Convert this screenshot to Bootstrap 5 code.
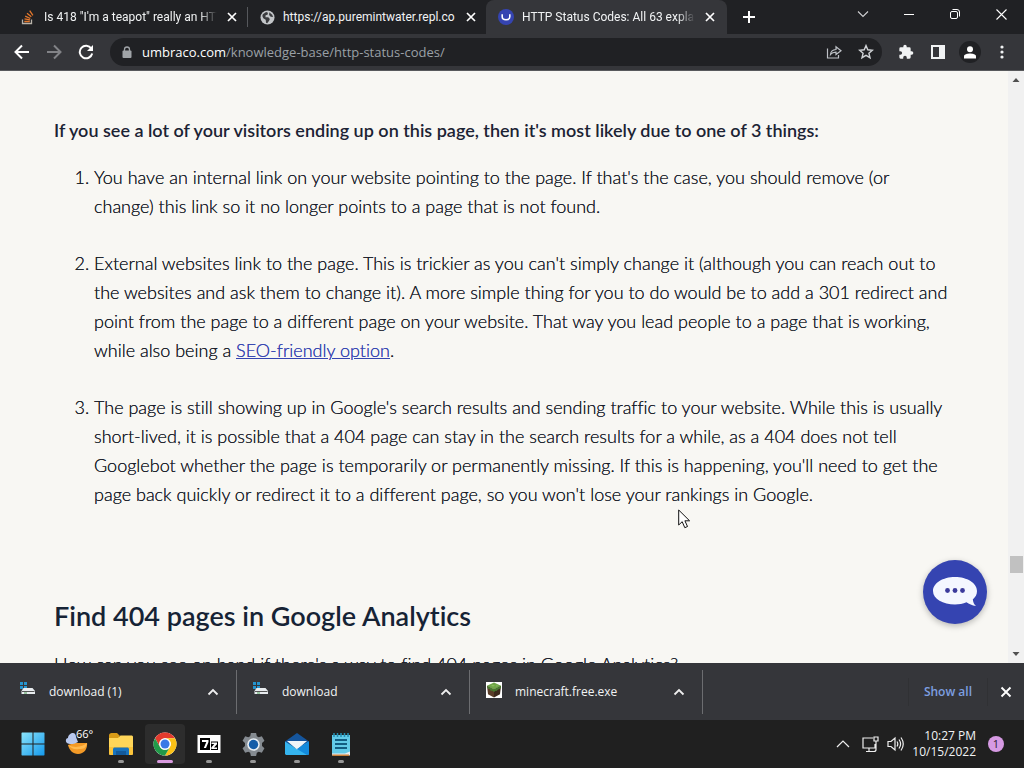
<!DOCTYPE html>
<html lang="en">
<head>
<meta charset="utf-8">
<meta name="viewport" content="width=device-width, initial-scale=1">
<title>HTTP Status Codes: All 63 explained</title>
<link href="https://cdn.jsdelivr.net/npm/bootstrap@5.3.0/dist/css/bootstrap.min.css" rel="stylesheet">
<style>
  body { font-family: "Open Sans", "Noto Sans", sans-serif; font-size: 12px; line-height: 16px; background: #202124; color: #f1f3f4; }
  svg { display: block; flex: none; }
  .plain { border: 0; background: none; padding: 0; color: inherit; display: flex; align-items: center; justify-content: center; flex: none; }
  .tab-strip { height: 34px; background: #202124; }
  .page-tab { height: 34px; flex: 0 1 238px; min-width: 0; padding-left: 12px; padding-right: 8px; }
  .page-tab.first-tab { flex-basis: 248px; padding-left: 20px; border-right: 1px solid transparent; border-image: linear-gradient(transparent 8px, #56585c 8px 26px, transparent 26px) 1; }
  .page-tab.current { background: #35363a; border-radius: 8px 8px 0 0; flex-basis: 241px; padding-right: 10px; }
  .tab-title { font-family: Roboto, sans-serif; flex: 1 1 0; overflow: hidden; white-space: nowrap; color: #f1f3f4; text-decoration: none; }
  .fade-end { -webkit-mask-image: linear-gradient(90deg, #000 90%, transparent); mask-image: linear-gradient(90deg, #000 90%, transparent); }
  .win-btn { width: 46px; height: 28px; }
  .toolbar { height: 37px; background: #35363a; border-bottom: 1px solid #58595c; padding-left: 6px; padding-right: 6px; }
  .tool { width: 32px; height: 28px; }
  .omnibox { height: 28px; border-radius: 14px; background: #202124; padding-left: 12px; gap: 10px; }
  .omnibox input { background: none; border: 0; outline: 0; padding: 0; color: #9aa0a6; font-size: 13px; }
  .domain { font-size: 13px; color: #fff; }
  .avatar-dot { width: 22px; height: 22px; border-radius: 50%; background: #202124; }
  .view { background: #f8f7f3; min-height: 0; }
  .article { font-family: Lato, sans-serif; font-variant-ligatures: none; font-size: 18px; line-height: 29px; color: #1b1f2c; padding: 45px 60px 0 54px; overflow: hidden; }
  .lead-line { font-weight: 600; color: #1c2334; margin-bottom: 18px; }
  .body-text { font-weight: 300; text-shadow: 0 0 0 currentColor; }
  .article ol { padding-left: 40px; margin-bottom: 89px; }
  .article li { margin-bottom: 28px; }
  .article a { color: #3544b1; }
  .article h2 { font-size: 27px; line-height: 36px; font-weight: 600; color: #162335; margin-bottom: 16px; }
  .scroll-track { width: 16px; background: #f1f1f1; }
  .thumb { width: 13px; height: 17px; background: #c1c1c1; }
  .chat { position: absolute; right: 37px; bottom: 39px; width: 64px; height: 64px; border-radius: 50%; background: #3544b1; box-shadow: 0 2px 6px #0004; }
  .pointer { position: absolute; left: 678px; top: 438px; }
  .shelf { height: 57px; background: #35363a; }
  .shelf-item { width: 233px; height: 44px; border-right: 1px solid #6c6d70; padding-left: 16px; padding-right: 17px; }
  .shelf-item.first-item { width: 237px; padding-left: 20px; }
  .shelf-item a { margin-left: 13px; }
  .show-all { height: 28px; padding: 0 15px; color: #7d9fe0; font-weight: 600; border: solid #303134; border-width: 0 1px; }
  .taskbar { height: 48px; background: #202020; }
  .apps { padding-left: 5px; }
  .app { width: 40px; height: 40px; border-radius: 4px; position: relative; }
  .app.open::after { content: ""; position: absolute; bottom: 1px; left: 17px; width: 6px; height: 3px; border-radius: 2px; background: #969696; }
  .app.active { background: #2d2d2d; }
  .app.active::after { left: 12px; width: 16px; background: #d99be0; }
  .temp { position: absolute; left: 19px; top: 3px; font-size: 11px; line-height: 14px; color: #fff; }
  .count { width: 16px; height: 16px; border-radius: 50%; background: #d69ae3; color: #2b1b30; font-size: 11px; }
</style>
</head>
<body>
<div class="vh-100 d-flex flex-column overflow-hidden">

  <header class="flex-shrink-0">
    <div class="tab-strip d-flex">
      <div class="page-tab first-tab d-flex align-items-center gap-2">
        <svg width="16" height="16" viewBox="0 0 16 16" fill="none"><path d="M2.5 10.5v4h9v-4" stroke="#b8b2a9" stroke-width="1.3"/><path d="M4.3 12.5h5.5M4.5 9.9l5.500 1M5.200 7.100l5.100 2.400M7 4.300l4.300 3.500M9.700 1.700l3.200 4.600" stroke="#e5782c" stroke-width="1.3"/></svg>
        <a href="#" class="tab-title fade-end">Is 418 "I'm a teapot" really an HTTP</a>
        <button class="plain" aria-label="Close tab"><svg width="14" height="14" viewBox="0 0 14 14" stroke="#fff" stroke-width="1.7"><path d="M3 3l8 8M11 3l-8 8"/></svg></button>
      </div>
      <div class="page-tab d-flex align-items-center gap-2">
        <svg width="15" height="15" viewBox="0 0 16 16"><circle cx="8" cy="8" r="7.5" fill="#c3c6c9"/><path d="M3 4.500L6.500 2l2 1-.5 2-2 .6-.2 2 3 .2 1.700 1.700-.8 2-2 2.600-1.300-.6-.3-3-2.600-1.800-1-2.300z" fill="#3a3b3e"/><path d="M10 2.500l3 2.500 1 2.500-2.600-.3-1.700-2z" fill="#3a3b3e"/></svg>
        <a href="#" class="tab-title">https://ap.puremintwater.repl.co</a>
        <button class="plain" aria-label="Close tab"><svg width="14" height="14" viewBox="0 0 14 14" stroke="#fff" stroke-width="1.7"><path d="M3 3l8 8M11 3l-8 8"/></svg></button>
      </div>
      <div class="page-tab current d-flex align-items-center gap-2">
        <svg width="16" height="16" viewBox="0 0 16 16"><circle cx="8" cy="8" r="8" fill="#3544b1"/><path d="M4.200 5.200v2.600c0 2 1 3 3.800 3s3.800-1 3.800-3V5.200" fill="none" stroke="#fff" stroke-width="1.6"/></svg>
        <a href="#" class="tab-title fade-end">HTTP Status Codes: All 63 explained</a>
        <button class="plain" aria-label="Close tab"><svg width="14" height="14" viewBox="0 0 14 14" stroke="#fff" stroke-width="1.7"><path d="M3 3l8 8M11 3l-8 8"/></svg></button>
      </div>
      <button class="plain px-3" aria-label="New tab"><svg width="12" height="12" viewBox="0 0 12 12" stroke="#fff" stroke-width="2"><path d="M6 0v12M0 6h12"/></svg></button>
      <div class="ms-auto d-flex">
        <button class="plain win-btn" aria-label="Search tabs"><svg width="12" height="8" viewBox="0 0 12 8" fill="none" stroke="#d0d1d3" stroke-width="1.1"><path d="M1 1.500l5 5 5-5"/></svg></button>
        <button class="plain win-btn" aria-label="Minimize"><svg width="10" height="10" viewBox="0 0 10 10"><path d="M0 5.500h10" stroke="#fff"/></svg></button>
        <button class="plain win-btn" aria-label="Restore"><svg width="10" height="10" viewBox="0 0 10 10" fill="none" stroke="#fff"><rect x=".5" y="2.500" width="7" height="7" rx="1.5"/><path d="M2.500 .5H7a2.500 2.500 0 0 1 2.500 2.500v4.500"/></svg></button>
        <button class="plain win-btn" aria-label="Close"><svg width="11" height="11" viewBox="0 0 11 11" stroke="#fff" stroke-width="1.1"><path d="M.5 .5l10 10M10.500 .5l-10 10"/></svg></button>
      </div>
    </div>

    <div class="toolbar d-flex align-items-center">
      <button class="plain tool" aria-label="Back"><svg width="16" height="16" viewBox="0 0 16 16" fill="none" stroke="#fff" stroke-width="2"><path d="M15 8H2M8 1.500L1.500 8 8 14.500"/></svg></button>
      <button class="plain tool" aria-label="Forward"><svg width="16" height="16" viewBox="0 0 16 16" fill="none" stroke="#828387" stroke-width="2"><path d="M1 8h13M8 1.500L14.500 8 8 14.500"/></svg></button>
      <button class="plain tool" aria-label="Reload"><svg width="16" height="16" viewBox="0 0 16 16"><path d="M13.300 4.500A6.300 6.300 0 1 0 14.200 9.500" fill="none" stroke="#fff" stroke-width="2"/><path d="M15 1v6H9z" fill="#fff"/></svg></button>
      <div class="omnibox d-flex align-items-center flex-grow-1 ms-2 me-2">
        <svg width="10" height="13" viewBox="0 0 10 13"><path d="M2.500 6V3.500a2.500 2.500 0 0 1 5 0V6" fill="none" stroke="#a0a4a8" stroke-width="1.300"/><rect x="0.500" y="4.500" width="9" height="7.500" rx="1" fill="#a0a4a8"/></svg>
        <div class="d-flex flex-grow-1">
          <label for="url" class="domain">umbraco.com</label>
          <input id="url" class="flex-grow-1" type="text" value="/knowledge-base/http-status-codes/">
        </div>
        <div class="d-flex">
          <button class="plain tool" aria-label="Share"><svg width="16" height="16" viewBox="0 0 16 16" fill="none" stroke="#bdc1c6" stroke-width="1.200"><path d="M1.500 4.500v9.500h11v-3M4.500 10.500c.3-3.300 2-4.800 5.500-5V2.800l5 4-5 3.700V8.200c-2.500 0-4.300.7-5.500 2.300z"/></svg></button>
          <button class="plain tool" aria-label="Bookmark"><svg width="16" height="16" viewBox="0 0 16 16" fill="none" stroke="#d0d3d6" stroke-width="1.400"><path d="M8 1.600l1.800 4.200 4.600.4-3.500 3 1.100 4.500L8 11.300l-4 2.400 1.100-4.500-3.500-3 4.600-.4z"/></svg></button>
        </div>
      </div>
      <button class="plain tool" aria-label="Extensions"><svg width="16" height="16" viewBox="0 0 24 24" fill="#f1f3f4"><path d="M20.500 11H19V7a2 2 0 0 0-2-2h-4V3.500a2.500 2.500 0 0 0-5 0V5H4a2 2 0 0 0-2 2v3.800h1.500a2.700 2.700 0 0 1 0 5.400H2V20a2 2 0 0 0 2 2h3.800v-1.500a2.700 2.700 0 0 1 5.400 0V22H17a2 2 0 0 0 2-2v-4h1.500a2.500 2.500 0 0 0 0-5z"/></svg></button>
      <button class="plain tool" aria-label="Side panel"><svg width="14" height="14" viewBox="0 0 14 14"><path d="M0 0h14v14H0zM2 2v10h6V2z" fill="#f1f3f4" fill-rule="evenodd"/></svg></button>
      <button class="plain tool" aria-label="Profile"><span class="avatar-dot d-flex align-items-center justify-content-center"><svg width="12" height="13" viewBox="0 0 12 13" fill="#fff"><circle cx="6" cy="3.200" r="3"/><path d="M0 12.500v-2.300C0 8.300 3.500 7.500 6 7.500s6 .8 6 2.700v2.300z"/></svg></span></button>
      <button class="plain tool" aria-label="Menu"><svg width="4" height="14" viewBox="0 0 4 14" fill="#f1f3f4"><circle cx="2" cy="2" r="1.600"/><circle cx="2" cy="7" r="1.600"/><circle cx="2" cy="12" r="1.600"/></svg></button>
    </div>
  </header>

  <main class="view d-flex flex-grow-1 position-relative">
    <article class="article flex-grow-1">
      <p class="lead-line">If you see a lot of your visitors ending up on this page, then it's most likely due to one of 3 things:</p>
      <ol class="body-text">
        <li>You have an internal link on your website pointing to the page. If that's the case, you should remove (or change) this link so it no longer points to a page that is not found.</li>
        <li>External websites link to the page. This is trickier as you can't simply change it (although you can reach out to the websites and ask them to change it). A more simple thing for you to do would be to add a 301 redirect and point from the page to a different page on your website. That way you lead people to a page that is working, while also being a <a href="#">SEO-friendly option</a>.</li>
        <li>The page is still showing up in Google's search results and sending traffic to your website. While this is usually short-lived, it is possible that a 404 page can stay in the search results for a while, as a 404 does not tell Googlebot whether the page is temporarily or permanently missing. If this is happening, you'll need to get the page back quickly or redirect it to a different page, so you won't lose your rankings in Google.</li>
      </ol>
      <h2>Find 404 pages in Google Analytics</h2>
      <p class="body-text">How can you see on hand if there's a way to find 404 pages in Google Analytics?</p>
    </article>
    <div class="scroll-track d-flex flex-column align-items-center flex-shrink-0" aria-hidden="true">
      <svg width="16" height="16" viewBox="0 0 16 16"><path d="M4.500 11l3.500-4 3.500 4z" fill="#505050"/></svg>
      <div style="flex-grow:469"></div>
      <div class="thumb"></div>
      <div style="flex-grow:74"></div>
      <svg width="16" height="16" viewBox="0 0 16 16"><path d="M4.500 5h7L8 9z" fill="#505050"/></svg>
    </div>
    <button class="plain chat" aria-label="Open chat"><svg width="46" height="32" viewBox="0 0 46 32"><path d="M23 1C11 1 1 7 1 15s10 13.500 22 13.500c4 0 8-.7 11.500-2.200 2.500 1.500 5.500 3.300 9.500 3.700-1.800-1.500-3-4-3.200-6.500C43.500 21 45 18.500 45 15 45 7 35 1 23 1z" fill="#f4f7ff"/><g fill="#3c3b9c"><circle cx="15.500" cy="14.500" r="2.400"/><circle cx="23" cy="14.500" r="2.400"/><circle cx="30.500" cy="14.500" r="2.400"/></g></svg></button>
    <svg class="pointer" width="13" height="20" viewBox="0 0 13 20"><path d="M.7 1v15l3.500-3.300 2.600 6 2.700-1.200-2.600-5.700h4.700z" fill="#fff" stroke="#111"/></svg>
  </main>

  <section class="shelf d-flex align-items-center flex-shrink-0" aria-label="Downloads">
    <div class="shelf-item first-item d-flex align-items-center">
      <svg width="16" height="16" viewBox="0 0 16 16" class="mb-1"><path d="M0 0h3v3H0zM4 0h3v3H4zM0 4h3v3H0zM4 4h3v3H4z" fill="#2494cf"/><path d="M3.500 6h9l2.500 3v3H1.500V9z" fill="#e8ecef"/><path d="M2 9.500h12.500" stroke="#555"/><path d="M4 11h3" stroke="#4d9e55"/></svg>
      <a href="#" class="text-reset text-decoration-none me-auto">download (1)</a>
      <button class="plain" aria-label="Options"><svg width="12" height="8" viewBox="0 0 12 8" fill="none" stroke="#eee" stroke-width="1.800"><path d="M1.500 6.500L6 2l4.500 4.500"/></svg></button>
    </div>
    <div class="shelf-item d-flex align-items-center">
      <svg width="16" height="16" viewBox="0 0 16 16" class="mb-1"><path d="M0 0h3v3H0zM4 0h3v3H4zM0 4h3v3H0zM4 4h3v3H4z" fill="#2494cf"/><path d="M3.500 6h9l2.500 3v3H1.500V9z" fill="#e8ecef"/><path d="M2 9.500h12.500" stroke="#555"/><path d="M4 11h3" stroke="#4d9e55"/></svg>
      <a href="#" class="text-reset text-decoration-none me-auto">download</a>
      <button class="plain" aria-label="Options"><svg width="12" height="8" viewBox="0 0 12 8" fill="none" stroke="#eee" stroke-width="1.800"><path d="M1.500 6.500L6 2l4.500 4.500"/></svg></button>
    </div>
    <div class="shelf-item d-flex align-items-center">
      <svg width="16" height="16" viewBox="0 0 16 16" class="mb-1"><path d="M0 0h16v16H0z" fill="#fff"/><path d="M8 .5l7 3.200L8 7.500 1 3.700z" fill="#6fa548"/><path d="M1 3.700l7 3.800v8l-6-3.300z" fill="#5a3d28"/><path d="M15 3.700L8 7.500v8l6-3.300z" fill="#3c291c"/><path d="M1 3.700l7 3.800 7-3.800v2l-2 1.600-1 .1-1.500 1.700-1-.3L8 10 6 8.600 5 9 3.600 7 2 6.800z" fill="#47792f"/><path d="M5 3.500l2-.8 2 1-2 .8zM9.500 4l1.500-.8 1 .6-1.500.8z" fill="#87bf5a"/></svg>
      <a href="#" class="text-reset text-decoration-none me-auto">minecraft.free.exe</a>
      <button class="plain" aria-label="Options"><svg width="12" height="8" viewBox="0 0 12 8" fill="none" stroke="#eee" stroke-width="1.800"><path d="M1.500 6.500L6 2l4.500 4.500"/></svg></button>
    </div>
    <button class="plain show-all ms-auto">Show all</button>
    <button class="plain px-2 me-1 ms-1" aria-label="Close downloads"><svg width="12" height="12" viewBox="0 0 12 12" stroke="#fff" stroke-width="1.900"><path d="M1.500 1.500l9 9M10.500 1.500l-9 9"/></svg></button>
  </section>

  <footer class="taskbar d-flex align-items-center px-2 flex-shrink-0">
    <nav class="apps d-flex gap-1" aria-label="Taskbar">
      <button class="plain app" aria-label="Start"><svg width="24" height="24" viewBox="0 0 24 24"><defs><linearGradient id="win" x2="1" y2="1"><stop stop-color="#8be4fb"/><stop offset="1" stop-color="#1499ec"/></linearGradient></defs><path d="M1 .5h10.500v11H.5V1zM12.500 .5h10.500l.5.5v10.500h-11zM.5 12.500h11v11H1l-.5-.5zM12.500 12.500h11V23l-.5.5H12.500z" fill="url(#win)"/></svg></button>
      <button class="plain app" aria-label="Weather"><svg width="28" height="28" viewBox="0 0 28 28"><path d="M5 15c3-1 8-2 10-5l9 2c1 7-3 12-9 12-5 0-9-4-10-9z" fill="#f39a27"/><path d="M5 15c8 4 15 1 19-2-1 5-3 6-8 6-5 1-8-1-11-4z" fill="#ffba50"/><path d="M13 9h12v4H13z" fill="#202020"/><path d="M4 13c-2-2-1-5 1-5 0-3 3-5 5-5 2 0 3 2 3 4l2 5c-3 2-8 3-11 1z" fill="#b9c9ef"/></svg><span class="temp">66°</span></button>
      <button class="plain app open" aria-label="File Explorer"><svg width="26" height="24" viewBox="0 0 26 24"><path d="M1 3.500C1 2 2 1 3.500 1H9l2.500 2.500V8H1z" fill="#d89b17"/><path d="M1 6h9l2.500-2.500H24l1 1V22l-1 1H2l-1-1z" fill="#ffd659"/><path d="M1 15h24v7l-1 1H2l-1-1z" fill="#fbc43a"/><path d="M5 16.500l1-1h14l1 1V23H5z" fill="#1873bd"/><path d="M8 19h10v4H8z" fill="#135a9b"/></svg></button>
      <button class="plain app open active" aria-label="Chrome"><svg width="24" height="24" viewBox="0 0 24 24"><circle cx="12" cy="12" r="11.500" fill="#fff"/><path d="M2.040 6.250A11.500 11.500 0 0 1 21.960 6.250H12A5.700 5.700 0 0 0 7 14.900z" fill="#e33b2e"/><path d="M21.960 6.250A11.500 11.500 0 0 1 12 23.500L17 14.900A5.700 5.700 0 0 0 12 6.250z" fill="#fbc116"/><path d="M12 23.500A11.500 11.500 0 0 1 2.040 6.250L7 14.900A5.700 5.700 0 0 0 17 14.900z" fill="#219a49"/><circle cx="12" cy="12" r="5.700" fill="#fff"/><circle cx="12" cy="12" r="4.500" fill="#3979e6"/></svg></button>
      <button class="plain app open" aria-label="7-Zip"><svg width="24" height="20" viewBox="0 0 24 20"><path d="M.5 1h23v18H.5z" fill="#fff"/><path d="M3 4h10v12H3zM14 7.500h7V16h-7z" fill="#000"/><path d="M5 6h6.500v2L9 14H6.800l2.500-6H5z" fill="#fff"/><path d="M14.500 8.500H20v1.700l-3 3.300h3V15h-5.700v-1.500l3-3.400h-2.800z" fill="#fff"/></svg></button>
      <button class="plain app open" aria-label="Settings"><svg width="25" height="25" viewBox="0 0 24 24"><path d="M9.500 1h5l.7 3 1.800 1 3-1 2.500 4.300-2.300 2.200v3l2.300 2.200L20 20l-3-1-1.800 1-.7 3h-5l-.7-3L7 19l-3 1-2.500-4.300 2.300-2.200v-3L1.500 8.300 4 4l3 1 1.800-1z" fill="#858b91"/><circle cx="12" cy="12" r="6" fill="#e9eef3"/><circle cx="12" cy="12" r="4.500" fill="#165da8"/></svg></button>
      <button class="plain app open" aria-label="Mail"><svg width="26" height="24" viewBox="0 0 26 24"><path d="M1 9.500L13 1l12 8.500V15H1z" fill="#15559c"/><path d="M1 9.500V22l1 1h22l1-1V9.500L13 17z" fill="#35b4ee"/><path d="M3 9h20l-10 8.500z" fill="#eef4f8"/><path d="M25 9.500V22l-1 1h-1L10 15.200l3 1.800z" fill="#138adc"/></svg></button>
      <button class="plain app open" aria-label="Notepad"><svg width="20" height="25" viewBox="0 0 20 25"><path d="M1 3h18v20H1z" fill="#62cae8"/><path d="M1 21.500h13l5-2V23l-1 1H2l-1-1z" fill="#e9edf0"/><path d="M1 22.500h17V24H2z" fill="#c87f39"/><path d="M4 8h12M4 12h12M4 16h12" stroke="#125d82" stroke-width="1.800"/><path d="M3 1v4M6.500 1v4M10 1v4M13.500 1v4M17 1v4" stroke="#238eb2" stroke-width="1.500"/></svg></button>
    </nav>
    <div class="d-flex align-items-center ms-auto me-1 pe-1">
      <button class="plain me-2 px-1" aria-label="Hidden icons"><svg width="14" height="8" viewBox="0 0 14 8" fill="none" stroke="#eee" stroke-width="1.200"><path d="M1 7l6-6 6 6"/></svg></button>
      <button class="plain me-2" aria-label="Network"><svg width="17" height="17" viewBox="0 0 17 17" fill="none" stroke="#eee" stroke-width="1.200"><path d="M11 2H1v10h12V8M4 15.500h8M7 12v3.500M12 1h4v4h-4zM14 5v8.500q0 2-2 2"/></svg></button>
      <button class="plain me-2" aria-label="Volume"><svg width="17" height="16" viewBox="0 0 17 16" fill="none" stroke="#eee" stroke-width="1.200"><path d="M1 5.500h3L8 2v12l-4-3.500H1zM10 5.500q1.600 2.500 0 5M12 3.500q3.200 4.500 0 9M14 1.500q4.500 6.500 0 13"/></svg></button>
      <time class="text-end text-nowrap me-2 pe-1" datetime="2022-10-15T22:27">10:27 PM<br>10/15/2022</time>
      <span class="count d-flex align-items-center justify-content-center me-1">1</span>
    </div>
  </footer>
</div>
<script src="https://cdn.jsdelivr.net/npm/bootstrap@5.3.0/dist/js/bootstrap.bundle.min.js"></script>
</body>
</html>
